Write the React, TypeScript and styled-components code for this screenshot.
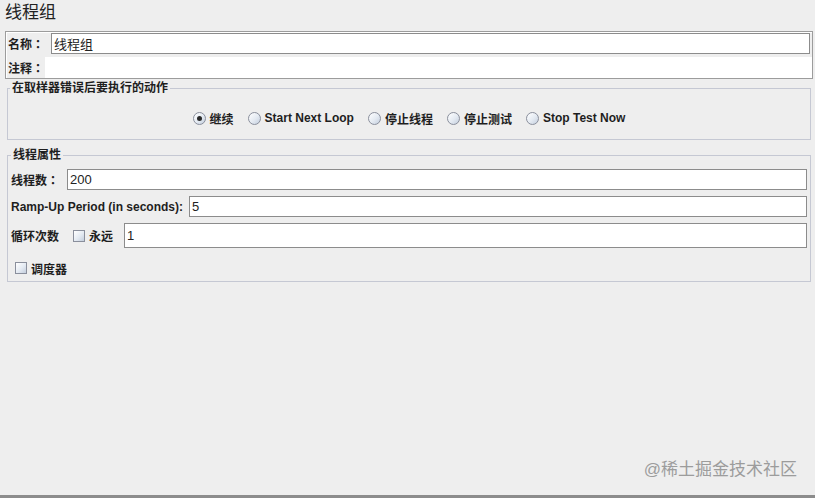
import styled, { createGlobalStyle } from "styled-components"

const FONT = `"Liberation Sans", "Noto Sans CJK SC", sans-serif`

const GlobalStyle = createGlobalStyle`
  html, body {
    margin: 0;
    padding: 0;
    background: #eeeeee;
  }
  * {
    box-sizing: border-box;
  }
`

type RadioItem = { label: string; checked?: boolean }

const errorActions: RadioItem[] = [
  { label: "继续", checked: true },
  { label: "Start Next Loop" },
  { label: "停止线程" },
  { label: "停止测试" },
  { label: "Stop Test Now" },
]

export default function App() {
  return (
    <Page>
      <GlobalStyle />
      <Title>线程组</Title>

      <NamePanel>
        <NameRow>
          <Label $width={44}>
            名称<Colon>：</Colon>
          </Label>
          <TextField value="线程组" />
        </NameRow>
        <NameRow>
          <Label $width={38}>
            注释<Colon>：</Colon>
          </Label>
          <CommentArea />
        </NameRow>
      </NamePanel>

      <Group $top={2} $padTop={14} $padBottom={13}>
        <Legend $offset={-1}>在取样器错误后要执行的动作</Legend>
        <RadioRow>
          {errorActions.map((item) => (
            <Choice key={item.label}>
              <RadioDot $checked={!!item.checked} />
              {item.label}
            </Choice>
          ))}
        </RadioRow>
      </Group>

      <Group $top={8} $padTop={6} $padBottom={5}>
        <Legend $offset={0}>线程属性</Legend>
        <PropRows>
          <FieldRow>
            <Label $gap={8}>
              线程数<Colon>：</Colon>
            </Label>
            <TextField value="200" />
          </FieldRow>
          <FieldRow>
            <Label $gap={6}>Ramp-Up Period (in seconds):</Label>
            <TextField value="5" />
          </FieldRow>
          <FieldRow $height={25}>
            <Label $gap={14}>循环次数</Label>
            <Choice $gapAfter={11}>
              <CheckBox />
              永远
            </Choice>
            <TextField value="1" />
          </FieldRow>
          <SchedulerRow>
            <Choice>
              <CheckBox />
              调度器
            </Choice>
          </SchedulerRow>
        </PropRows>
      </Group>

      <Watermark>@稀土掘金技术社区</Watermark>
    </Page>
  )
}

const Page = styled.div`
  position: relative;
  width: 815px;
  height: 498px;
  background: #eeeeee;
  border-bottom: 3px solid #8c8c8c;
  font-family: ${FONT};
  color: #1e1e1e;
  overflow: hidden;
`

const Title = styled.div`
  height: 26px;
  line-height: 26px;
  padding-left: 5px;
  font-size: 17px;
  color: #222;
`

const NamePanel = styled.div`
  display: flex;
  flex-direction: column;
  gap: 3px;
  margin: 5px 2px 0 5px;
  padding: 1px 0 0 1px;
  border: 1px solid #9c9c9c;
  box-shadow: inset 1px 1px 0 #ffffff;
`

const NameRow = styled.div`
  display: flex;
  align-items: stretch;
  height: 21px;
`

const Label = styled.span<{ $width?: number; $gap?: number }>`
  flex: none;
  display: flex;
  align-items: center;
  width: ${(p) => (p.$width ? `${p.$width}px` : "auto")};
  margin-right: ${(p) => p.$gap ?? 0}px;
  padding-left: ${(p) => (p.$width ? 1 : 0)}px;
  font-size: 12px;
  font-weight: bold;
  white-space: nowrap;
`

const Colon = styled.span`
  font-family: "Noto Sans CJK TC", "Noto Sans CJK SC", sans-serif;
`

const TextField = styled.input.attrs({ readOnly: true, type: "text" })`
  flex: 1;
  min-width: 0;
  height: 100%;
  margin: 0 2px 0 0;
  padding: 0 2px;
  border: 1px solid #8c8c8c;
  border-radius: 0;
  background: #ffffff;
  font-family: ${FONT};
  font-size: 13px;
  color: #222;
  outline: none;
`

const CommentArea = styled.div`
  flex: 1;
  background: #ffffff;
`

const Group = styled.fieldset<{ $top: number; $padTop: number; $padBottom: number }>`
  margin: ${(p) => p.$top}px 4px 0 7px;
  padding: ${(p) => p.$padTop}px 3px ${(p) => p.$padBottom}px 3px;
  border: 1px solid #c5c8d3;
  min-width: 0;
`

const Legend = styled.legend<{ $offset?: number }>`
  margin-left: ${(p) => p.$offset ?? 0}px;
  padding: 0 2px;
  line-height: 15px;
  font-size: 12px;
  font-weight: bold;
  color: #1e1e1e;
`

const RadioRow = styled.div`
  display: flex;
  justify-content: center;
  align-items: center;
  gap: 14px;
  height: 16px;
`

const Choice = styled.span<{ $gapAfter?: number }>`
  display: inline-flex;
  align-items: center;
  gap: 4px;
  margin-right: ${(p) => p.$gapAfter ?? 0}px;
  font-size: 12px;
  font-weight: bold;
  white-space: nowrap;
`

const RadioDot = styled.span<{ $checked: boolean }>`
  position: relative;
  flex: none;
  width: 13px;
  height: 13px;
  border-radius: 50%;
  border: 1px solid #8a8f9c;
  background: linear-gradient(135deg, #ffffff 0%, #e4eaf2 55%, #c3cedd 100%);

  &::after {
    content: "";
    display: ${(p) => (p.$checked ? "block" : "none")};
    position: absolute;
    left: 3px;
    top: 3px;
    width: 5px;
    height: 5px;
    border-radius: 50%;
    background: #2a2a2a;
  }
`

const CheckBox = styled.span`
  flex: none;
  width: 12px;
  height: 12px;
  border: 1px solid #8a8f9c;
  background: linear-gradient(135deg, #ffffff 0%, #e4eaf2 55%, #c3cedd 100%);
`

const PropRows = styled.div`
  display: flex;
  flex-direction: column;
  gap: 6px;
`

const FieldRow = styled.div<{ $height?: number }>`
  display: flex;
  align-items: stretch;
  height: ${(p) => p.$height ?? 21}px;

  input {
    margin-right: 0;
  }
`

const SchedulerRow = styled.div`
  display: flex;
  align-items: center;
  height: 16px;
  margin-top: 6px;
  padding-left: 4px;
`

const Watermark = styled.div`
  position: absolute;
  right: 18px;
  bottom: 15px;
  font-size: 17px;
  line-height: 20px;
  color: #9c9c9c;
`
